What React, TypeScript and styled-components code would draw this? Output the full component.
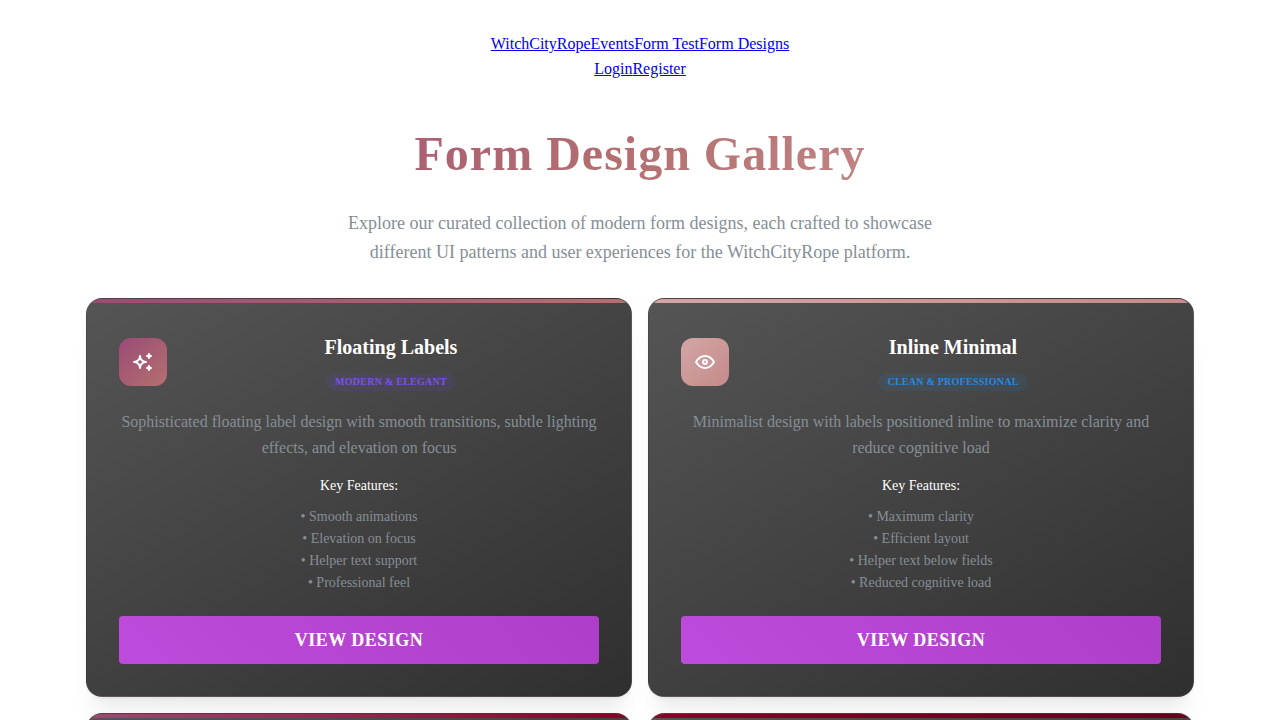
import React from 'react';
import styled, { createGlobalStyle } from 'styled-components';

const GlobalStyle = createGlobalStyle`
  *, *::before, *::after { box-sizing: border-box; }
  body {
    margin: 0;
    background: #fff;
    color: #fff;
    font-family: "Liberation Serif", "Times New Roman", serif;
    font-size: 16px;
    line-height: 26px;
    text-align: center;
  }
  h1, h2, h3, p, ul { margin: 0; padding: 0; }
`;

const Nav = styled.nav`
  display: flex;
  flex-direction: column;
  align-items: center;
  padding-top: 31px;
  line-height: 25px;
`;

const NavRow = styled.div`
  display: flex;
`;

const NavLink = styled.a`
  color: #0000ee;
  text-decoration: underline;
`;

const Container = styled.main`
  max-width: 1140px;
  margin: 0 auto;
  padding: 41px 16px;
`;

const Intro = styled.header`
  display: flex;
  flex-direction: column;
  align-items: center;
  gap: 23px;
  margin-bottom: 31px;
`;

const PageTitle = styled.h1`
  font-size: 48px;
  line-height: 64px;
  letter-spacing: 1px;
  background: linear-gradient(135deg, #9b4a75 0%, #b47070 50%, #d0a0a0 100%);
  background-clip: text;
  -webkit-background-clip: text;
  color: transparent;
  align-self: stretch;
`;

const Lead = styled.p`
  max-width: 600px;
  font-size: 18px;
  line-height: 29px;
  color: #868e96;
`;

const Grid = styled.div`
  display: grid;
  grid-template-columns: repeat(auto-fit, minmax(min(100%, 400px), 1fr));
  gap: 16px;
`;

const Card = styled.article`
  border: 1px solid rgba(183, 109, 117, 0.1);
  border-radius: 16px;
  overflow: hidden;
  background: linear-gradient(150deg, #555 0%, #2f2f2f 100%);
  box-shadow:
    0 1px 3px rgba(0, 0, 0, 0.05),
    0 28px 23px -7px rgba(0, 0, 0, 0.05),
    0 12px 12px -7px rgba(0, 0, 0, 0.04);
`;

const Accent = styled.div<{ $fill: string }>`
  height: 4px;
  background: ${(p) => p.$fill};
`;

const CardBody = styled.div`
  display: flex;
  flex-direction: column;
  padding: 28px 32px 32px;
`;

const CardHeader = styled.div`
  display: flex;
  align-items: center;
  gap: 16px;
  margin-bottom: 16px;
`;

const IconTile = styled.div<{ $fill: string }>`
  display: flex;
  align-items: center;
  justify-content: center;
  flex: none;
  width: 48px;
  height: 48px;
  border-radius: 12px;
  background: ${(p) => p.$fill};
`;

const Heading = styled.div`
  flex: 1;
  display: flex;
  flex-direction: column;
  align-items: center;
  gap: 10px;
  padding-bottom: 2px;
`;

const CardTitle = styled.h2`
  font-size: 20px;
  line-height: 32px;
`;

const Badge = styled.span<{ $color: string; $tint: string }>`
  height: 18px;
  padding: 0 8px;
  border: 1px solid transparent;
  border-radius: 9px;
  font-size: 10px;
  line-height: 16px;
  font-weight: 700;
  letter-spacing: 0.25px;
  text-transform: uppercase;
  color: ${(p) => p.$color};
  background: ${(p) => p.$tint};
`;

const Description = styled.p`
  color: #868e96;
  margin-bottom: 14px;
`;

const FeatureTitle = styled.h3`
  font-size: 14px;
  line-height: 22px;
  font-weight: 500;
  margin-bottom: 9px;
`;

const FeatureList = styled.ul`
  list-style: none;
  font-size: 14px;
  line-height: 22px;
  color: #868e96;
  margin-bottom: 22px;
`;

const ViewButton = styled.button`
  height: 48px;
  border: 0;
  border-radius: 4px;
  font: inherit;
  font-size: 18px;
  font-weight: 700;
  letter-spacing: 0.5px;
  text-transform: uppercase;
  color: #fff;
  background: linear-gradient(45deg, #be4bdb 0%, #ae3ec9 100%);
  cursor: pointer;
`;

const EmptyBody = styled.div`
  height: 392px;
`;

const Icon = ({ paths }: { paths: string[] }) => (
  <svg width="24" height="24" viewBox="0 0 24 24" fill="none" stroke="#fff" strokeWidth="2" strokeLinecap="round" strokeLinejoin="round" aria-hidden="true">
    {paths.map((d) => (
      <path key={d} d={d} />
    ))}
  </svg>
);

const SPARKLES = [
  'M16 18a2 2 0 0 1 2 2a2 2 0 0 1 2 -2a2 2 0 0 1 -2 -2a2 2 0 0 1 -2 2zm0 -12a2 2 0 0 1 2 2a2 2 0 0 1 2 -2a2 2 0 0 1 -2 -2a2 2 0 0 1 -2 2zm-7 12a6 6 0 0 1 6 -6a6 6 0 0 1 -6 -6a6 6 0 0 1 -6 6a6 6 0 0 1 6 6z',
];
const EYE = [
  'M10 12a2 2 0 1 0 4 0a2 2 0 0 0 -4 0',
  'M21 12c-2.4 4 -5.4 6 -9 6c-3.6 0 -6.6 -2 -9 -6c2.4 -4 5.4 -6 9 -6c3.6 0 6.6 2 9 6',
];

const designs = [
  {
    title: 'Floating Labels',
    badge: 'Modern & Elegant',
    color: '#7950f2',
    tint: 'rgba(121, 80, 242, 0.1)',
    icon: SPARKLES,
    from: '#9b4a75',
    to: '#b47070',
    description:
      'Sophisticated floating label design with smooth transitions, subtle lighting effects, and elevation on focus',
    features: ['Smooth animations', 'Elevation on focus', 'Helper text support', 'Professional feel'],
  },
  {
    title: 'Inline Minimal',
    badge: 'Clean & Professional',
    color: '#228be6',
    tint: 'rgba(34, 139, 230, 0.1)',
    icon: EYE,
    from: '#d4a5a5',
    to: '#c48b8b',
    description:
      'Minimalist design with labels positioned inline to maximize clarity and reduce cognitive load',
    features: ['Maximum clarity', 'Efficient layout', 'Helper text below fields', 'Reduced cognitive load'],
  },
];

const accentCards = [
  { from: '#9b4a75', to: '#880124' },
  { from: '#880124', to: '#660018' },
];

const gradient = (angle: number, from: string, to: string) =>
  `linear-gradient(${angle}deg, ${from} 0%, ${to} 100%)`;

export default function App() {
  return (
    <>
      <GlobalStyle />
      <Nav>
        <NavRow>
          <NavLink href="#home">WitchCityRope</NavLink>
          <NavLink href="#events">Events</NavLink>
          <NavLink href="#form-test">Form Test</NavLink>
          <NavLink href="#form-designs">Form Designs</NavLink>
        </NavRow>
        <NavRow>
          <NavLink href="#login">Login</NavLink>
          <NavLink href="#register">Register</NavLink>
        </NavRow>
      </Nav>
      <Container>
        <Intro>
          <PageTitle>Form Design Gallery</PageTitle>
          <Lead>
            Explore our curated collection of modern form designs, each crafted to showcase different UI
            patterns and user experiences for the WitchCityRope platform.
          </Lead>
        </Intro>
        <Grid>
          {designs.map((d) => (
            <Card key={d.title}>
              <Accent $fill={gradient(90, d.from, d.to)} />
              <CardBody>
                <CardHeader>
                  <IconTile $fill={gradient(135, d.from, d.to)}>
                    <Icon paths={d.icon} />
                  </IconTile>
                  <Heading>
                    <CardTitle>{d.title}</CardTitle>
                    <Badge $color={d.color} $tint={d.tint}>
                      {d.badge}
                    </Badge>
                  </Heading>
                </CardHeader>
                <Description>{d.description}</Description>
                <FeatureTitle>Key Features:</FeatureTitle>
                <FeatureList>
                  {d.features.map((f) => (
                    <li key={f}>• {f}</li>
                  ))}
                </FeatureList>
                <ViewButton type="button">View Design</ViewButton>
              </CardBody>
            </Card>
          ))}
          {accentCards.map((c) => (
            <Card key={c.from}>
              <Accent $fill={gradient(90, c.from, c.to)} />
              <EmptyBody />
            </Card>
          ))}
        </Grid>
      </Container>
    </>
  );
}
